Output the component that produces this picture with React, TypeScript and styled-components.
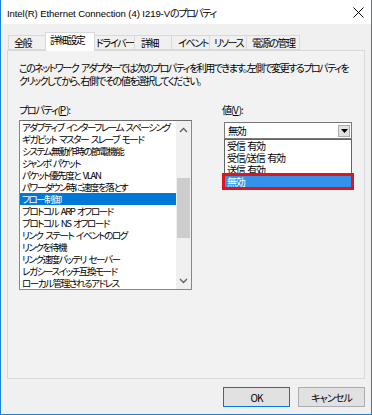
import React from 'react';
import styled, { createGlobalStyle } from 'styled-components';

const FONT = `"Noto Sans CJK JP", "Noto Sans", sans-serif`;

const GlobalStyle = createGlobalStyle`
  html, body { margin: 0; padding: 0; }
  body {
    font-family: ${FONT};
    background: #f0f0f0;
    font-feature-settings: "palt";
    word-spacing: 2px;
  }
`;

const tabs = [
    { label: '全般', width: 38, pad: 5 },
    { label: '詳細設定', width: 50, pad: 4, active: true },
    { label: 'ドライバー', width: 41, pad: 1 },
    { label: '詳細', width: 38, pad: 6 },
    { label: 'イベント', width: 39, pad: 6 },
    { label: 'リソース', width: 38, pad: 4 },
    { label: '電源の管理', width: 54, pad: 5 },
];

const properties = [
    'アダプティブ インターフレーム スペーシング',
    'ギガビット マスター スレーブ モード',
    'システム無動作時の節電機能',
    'ジャンボ パケット',
    'パケット優先度と VLAN',
    'パワーダウン時に速度を落とす',
    'フロー制御',
    'プロトコル ARP オフロード',
    'プロトコル NS オフロード',
    'リンク ステート イベントのログ',
    'リンクを待機',
    'リンク速度バッテリ セーバー',
    'レガシースイッチ互換モード',
    'ローカル管理されるアドレス',
];

const values = ['受信 有効', '受信/送信 有効', '送信 有効', '無効'];

const App = (): JSX.Element => {
    return (
        <>
            <GlobalStyle />
            <SWindow>
                <STitleBar>
                    <STitle>
                        Intel(R) Ethernet Connection (4) I219-V<STitleJa>のプロパティ</STitleJa>
                    </STitle>
                    <SClose>
                        <svg width="11" height="11" viewBox="0 0 11 11">
                            <path d="M0.5 0.5 L10.5 10.5 M10.5 0.5 L0.5 10.5" stroke="#000" strokeWidth="1" />
                        </svg>
                    </SClose>
                </STitleBar>
                <SBody>
                    <STabStrip>
                        {tabs.map((t) => (
                            <STab key={t.label} $width={t.width} $pad={t.pad} $active={!!t.active}>
                                {t.label}
                            </STab>
                        ))}
                    </STabStrip>
                    <SPanel>
                        <SDescription>
                            このネットワーク アダプターでは次のプロパティを利用できます。左側で変更するプロパティを
                            <br />
                            クリックしてから、右側でその値を選択してください。
                        </SDescription>
                        <SColumns>
                            <SLeftColumn>
                                <SLabel>
                                    プロパティ(<u>P</u>):
                                </SLabel>
                                <SListBox>
                                    <SItems>
                                        {properties.map((p, i) => (
                                            <SItem key={p} $selected={i === 6}>
                                                {p}
                                            </SItem>
                                        ))}
                                    </SItems>
                                    <SScrollBar>
                                        <SArrow>
                                            <svg width="9" height="6" viewBox="0 0 9 6">
                                                <path d="M1 5 L4.5 1.5 L8 5" stroke="#606060" strokeWidth="1.4" fill="none" />
                                            </svg>
                                        </SArrow>
                                        <STrack>
                                            <SThumb />
                                        </STrack>
                                        <SArrow>
                                            <svg width="9" height="6" viewBox="0 0 9 6">
                                                <path d="M1 1 L4.5 4.5 L8 1" stroke="#606060" strokeWidth="1.4" fill="none" />
                                            </svg>
                                        </SArrow>
                                    </SScrollBar>
                                </SListBox>
                            </SLeftColumn>
                            <SRightColumn>
                                <SLabel>
                                    値(<u>V</u>):
                                </SLabel>
                                <SComboWrap>
                                    <SCombo>
                                        <SComboText>無効</SComboText>
                                        <SComboButton>
                                            <svg width="7" height="4" viewBox="0 0 7 4">
                                                <path d="M0 0 L7 0 L3.5 4 Z" fill="#000" />
                                            </svg>
                                        </SComboButton>
                                    </SCombo>
                                    <SDropList>
                                        {values.map((v, i) => (
                                            <SDropItem key={v} $selected={i === 3}>
                                                {v}
                                            </SDropItem>
                                        ))}
                                    </SDropList>
                                    <SHighlight />
                                </SComboWrap>
                            </SRightColumn>
                        </SColumns>
                    </SPanel>
                    <SFooter>
                        <SButton $default>OK</SButton>
                        <SButton>キャンセル</SButton>
                    </SFooter>
                </SBody>
            </SWindow>
        </>
    );
};

const SWindow = styled.div`
    width: 372px;
    height: 415px;
    box-sizing: border-box;
    border: 1px solid #1883d7;
    border-top: none;
    background: #f0f0f0;
    display: flex;
    flex-direction: column;
    overflow: hidden;
`;

const STitleBar = styled.div`
    height: 24px;
    background: #fff;
    display: flex;
    align-items: center;
    padding-left: 6px;
    box-sizing: border-box;
`;

const STitle = styled.span`
    font-family: "Liberation Sans", ${FONT};
    font-size: 9.6px;
    letter-spacing: -0.1px;
    word-spacing: 0;
    color: #000;
`;

const STitleJa = styled.span`
    font-family: ${FONT};
    font-size: 10px;
    letter-spacing: -1.4px;
`;

const SClose = styled.div`
    margin-left: auto;
    width: 46px;
    height: 24px;
    display: flex;
    align-items: center;
    justify-content: center;
    margin-right: -10px;
`;

const SBody = styled.div`
    flex: 1;
    display: flex;
    flex-direction: column;
    padding: 8px 6px 0 6px;
`;

const STabStrip = styled.div`
    display: flex;
    align-items: flex-end;
    height: 18px;
    padding-left: 1px;
    position: relative;
    z-index: 1;
`;

const STab = styled.div<{ $width: number; $pad: number; $active: boolean }>`
    width: ${(p) => p.$width}px;
    height: ${(p) => (p.$active ? 19 : 15)}px;
    margin-bottom: ${(p) => (p.$active ? -1 : 0)}px;
    margin-left: -1px;
    box-sizing: border-box;
    border: 1px solid #d9d9d9;
    border-bottom: ${(p) => (p.$active ? 'none' : '1px solid #d9d9d9')};
    background: ${(p) => (p.$active ? '#fff' : '#f0f0f0')};
    font-size: 10px;
    letter-spacing: -1.4px;
    line-height: ${(p) => (p.$active ? 14 : 13)}px;
    padding-left: ${(p) => p.$pad}px;
    color: #000;
    white-space: nowrap;
    &:first-child { margin-left: 0; }
`;

const SPanel = styled.div`
    height: 329px;
    box-sizing: border-box;
    border: 1px solid #d9d9d9;
    background: #f2f2f2;
    padding: 0 11px;
`;

const SDescription = styled.p`
    margin: 10px 0 0 0;
    font-size: 10px;
    letter-spacing: -1.5px;
    line-height: 13px;
    color: #000;
    white-space: nowrap;
`;

const SColumns = styled.div`
    display: flex;
    margin-top: 17px;
`;

const SLeftColumn = styled.div`
    width: 173px;
    display: flex;
    flex-direction: column;
`;

const SRightColumn = styled.div`
    margin-left: 30px;
    width: 131px;
    display: flex;
    flex-direction: column;
`;

const SLabel = styled.div`
    font-size: 10px;
    letter-spacing: -1.2px;
    line-height: 12px;
    height: 12px;
    color: #000;
    margin-bottom: 4px;
    u { text-decoration: underline; letter-spacing: 0; }
`;

const SListBox = styled.div`
    height: 170px;
    box-sizing: border-box;
    border: 1px solid #828790;
    border-top-color: #6e6e6e;
    background: #fff;
    display: flex;
`;

const SItems = styled.div`
    flex: 1;
    display: flex;
    flex-direction: column;
    overflow: hidden;
`;

const SItem = styled.div<{ $selected: boolean }>`
    height: 12px;
    line-height: 12px;
    font-size: 9.6px;
    letter-spacing: -1.5px;
    padding-left: 2px;
    white-space: nowrap;
    color: ${(p) => (p.$selected ? '#fff' : '#000')};
    background: ${(p) => (p.$selected ? '#0078d7' : 'transparent')};
`;

const SScrollBar = styled.div`
    width: 15px;
    background: #f0f0f0;
    display: flex;
    flex-direction: column;
`;

const SArrow = styled.div`
    height: 17px;
    display: flex;
    align-items: center;
    justify-content: center;
`;

const STrack = styled.div`
    flex: 1;
    position: relative;
`;

const SThumb = styled.div`
    position: absolute;
    left: 1px;
    right: 1px;
    top: 40px;
    height: 60px;
    background: #cdcdcd;
`;

const SComboWrap = styled.div`
    position: relative;
    margin-left: 2px;
    margin-top: 2px;
    width: 128px;
`;

const SCombo = styled.div`
    height: 17px;
    box-sizing: border-box;
    border: 1px solid #7a7a7a;
    background: #fff;
    display: flex;
    align-items: center;
    padding: 0 1px 0 3px;
`;

const SComboText = styled.span`
    font-size: 10px;
    letter-spacing: -1.2px;
    line-height: 12px;
    flex: 1;
`;

const SComboButton = styled.div`
    width: 12px;
    height: 12px;
    box-sizing: border-box;
    border: 1px solid #adadad;
    background: #e1e1e1;
    display: flex;
    align-items: center;
    justify-content: center;
`;

const SDropList = styled.div`
    position: absolute;
    top: 17px;
    left: 0;
    width: 128px;
    box-sizing: border-box;
    border: 1px solid #646464;
    background: #fff;
    padding-bottom: 1px;
`;

const SDropItem = styled.div<{ $selected: boolean }>`
    height: 12px;
    line-height: 12px;
    font-size: 10px;
    letter-spacing: -1.3px;
    padding-left: 2px;
    color: ${(p) => (p.$selected ? '#fff' : '#000')};
    background: ${(p) => (p.$selected ? '#3393ec' : 'transparent')};
`;

const SHighlight = styled.div`
    position: absolute;
    top: 51px;
    left: -2px;
    width: 132px;
    height: 17px;
    box-sizing: border-box;
    border: 3px solid #e4121b;
`;

const SFooter = styled.div`
    display: flex;
    justify-content: flex-end;
    gap: 8px;
    padding-top: 8px;
`;

const SButton = styled.div<{ $default?: boolean }>`
    width: 67px;
    height: 20px;
    box-sizing: border-box;
    border: 1px solid ${(p) => (p.$default ? '#0078d7' : '#adadad')};
    background: #e1e1e1;
    display: flex;
    align-items: center;
    justify-content: center;
    font-size: 10px;
    letter-spacing: -0.9px;
    color: #000;
`;

export default App;
